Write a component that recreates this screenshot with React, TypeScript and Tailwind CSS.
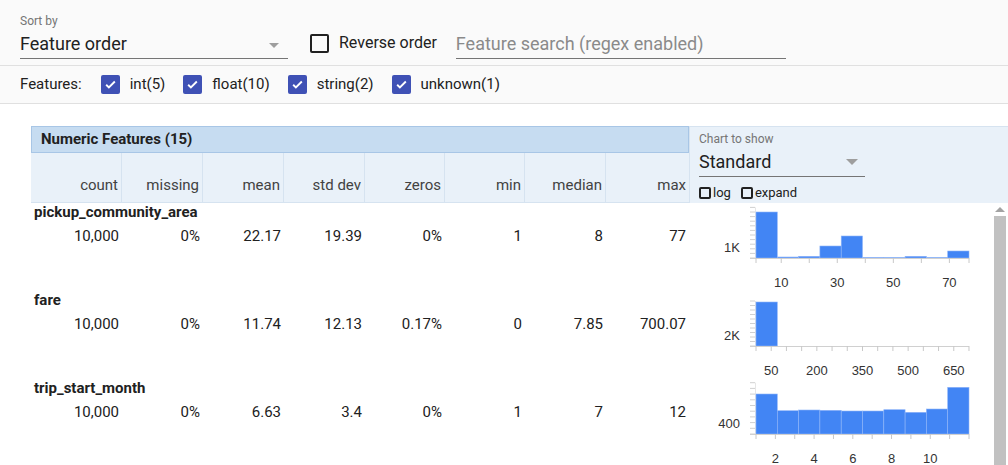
type Tick = { v: number; label?: string };

type ChartSpec = {
  bars: number[];
  ticks: Tick[];
  lo: number;
  hi: number;
  yLabel: string;
  yStep: number;
  yCount: number;
};

const X0 = 56;
const W = 213;
const BASE = 55;

function Histogram({ spec }: { spec: ChartSpec }) {
  const sx = (v: number) => X0 + ((v - spec.lo) / (spec.hi - spec.lo)) * W;
  const bw = W / spec.bars.length;
  return (
    <svg width="290" height="88" className="block" fontFamily="'Liberation Sans', Arial, sans-serif">
      {Array.from({ length: spec.yCount }).map((_, i) => (
        <line key={i} x1={50} x2={55} y1={BASE - i * spec.yStep} y2={BASE - i * spec.yStep} stroke="#d0d0d0" strokeWidth={1} />
      ))}
      <line x1={55.5} x2={55.5} y1={BASE - (spec.yCount - 1) * spec.yStep} y2={BASE} stroke="#e6e6e6" />
      {spec.bars.map((h, i) =>
        h > 0 ? (
          <rect key={i} x={X0 + i * bw} y={BASE - h} width={bw} height={h} fill="#4285f4" stroke="#8fb5f8" strokeWidth={0.6} />
        ) : null
      )}
      <line x1={50} x2={X0 + W} y1={BASE + 0.5} y2={BASE + 0.5} stroke="#d0d0d0" />
      {spec.ticks.map((t, i) => (
        <line key={i} x1={sx(t.v)} x2={sx(t.v)} y1={BASE} y2={BASE + 5} stroke="#c8c8c8" />
      ))}
      {spec.ticks
        .filter((t) => t.label)
        .map((t, i) => (
          <text key={i} x={sx(t.v)} y={BASE + 29} fontSize="13" fill="#333" textAnchor="middle">
            {t.label}
          </text>
        ))}
      <text x={40} y={BASE - 6} fontSize="13" fill="#333" textAnchor="end">
        {spec.yLabel}
      </text>
    </svg>
  );
}

const charts: ChartSpec[] = [
  {
    bars: [46, 1, 1.7, 12, 22, 0.5, 0.4, 1.7, 0.4, 7],
    ticks: [
      { v: 1 },
      { v: 10, label: "10" },
      { v: 20 },
      { v: 30, label: "30" },
      { v: 40 },
      { v: 50, label: "50" },
      { v: 60 },
      { v: 70, label: "70" },
      { v: 77 },
    ],
    lo: 1,
    hi: 77,
    yLabel: "1K",
    yStep: 4.6,
    yCount: 12,
  },
  {
    bars: [44, 0, 0, 0, 0, 0, 0, 0, 0, 0],
    ticks: Array.from({ length: 15 }).map((_, i) => ({
      v: i * 50,
      label: [50, 200, 350, 500, 650].includes(i * 50) ? String(i * 50) : undefined,
    })),
    lo: 0,
    hi: 700.07,
    yLabel: "2K",
    yStep: 4.5,
    yCount: 11,
  },
  {
    bars: [40, 23.3, 24, 23.7, 23, 23, 24.3, 21.7, 25, 46.7],
    ticks: Array.from({ length: 12 }).map((_, i) => ({
      v: i + 1,
      label: [2, 4, 6, 8, 10].includes(i + 1) ? String(i + 1) : undefined,
    })),
    lo: 1,
    hi: 12,
    yLabel: "400",
    yStep: 5.7,
    yCount: 10,
  },
];

const columns = ["count", "missing", "mean", "std dev", "zeros", "min", "median", "max"];
const colWidths = ["w-[91px]", "w-[81px]", "w-[81px]", "w-[81px]", "w-[80px]", "w-[80px]", "w-[81px]", "w-[83px]"];

const rows = [
  { name: "pickup_community_area", vals: ["10,000", "0%", "22.17", "19.39", "0%", "1", "8", "77"] },
  { name: "fare", vals: ["10,000", "0%", "11.74", "12.13", "0.17%", "0", "7.85", "700.07"] },
  { name: "trip_start_month", vals: ["10,000", "0%", "6.63", "3.4", "0%", "1", "7", "12"] },
];

function BlueCheck({ label }: { label: string }) {
  return (
    <div className="flex items-center gap-[10px]">
      <span className="w-[19px] h-[19px] rounded-[2px] bg-[#3f51b5] flex items-center justify-center">
        <svg width="13" height="13" viewBox="0 0 24 24">
          <path d="M4 12.5l5 5L20 6.5" fill="none" stroke="#fff" strokeWidth="3.4" />
        </svg>
      </span>
      <span className="text-[15px] text-[#212121]">{label}</span>
    </div>
  );
}

function SmallBox({ label }: { label: string }) {
  return (
    <div className="flex items-center gap-[2px]">
      <span className="w-[12px] h-[12px] border-2 border-[#222] rounded-[2px]" />
      <span className="text-[13px] text-[#212121]">{label}</span>
    </div>
  );
}

export default function App() {
  return (
    <div className="w-[1008px] h-[465px] overflow-hidden bg-white font-['Roboto',sans-serif] text-[#212121]">
      {/* top controls */}
      <div className="bg-[#fafafa]">
        <div className="h-[66px] px-5 flex border-b border-[#e0e0e0]">
          <div className="w-[268px] pt-[13px]">
            <p className="text-[12px] leading-[16px] text-[#757575]">Sort by</p>
            <div className="mt-[3px] h-[27px] border-b border-[#757575] flex items-center justify-between">
              <span className="text-[18px] leading-[24px] -mt-[2px]">Feature order</span>
              <span className="mr-[9px] w-0 h-0 border-l-[5px] border-r-[5px] border-t-[5px] border-l-transparent border-r-transparent border-t-[#9e9e9e]" />
            </div>
          </div>
          <div className="ml-[22px] pt-[34px] flex items-start gap-[10px]">
            <span className="w-[19px] h-[19px] border-2 border-[#212121] rounded-[2px]" />
            <span className="text-[16px] leading-[19px] -mt-[1px]">Reverse order</span>
          </div>
          <div className="ml-[19px] w-[330px] pt-[32px]">
            <div className="h-[27px] border-b border-[#757575] text-[18px] leading-[24px] text-[#8a8a8a]">
              Feature search (regex enabled)
            </div>
          </div>
        </div>
        <div className="h-[38px] px-5 flex items-center border-b border-[#e0e0e0]">
          <span className="text-[15px] mr-[19px]">Features:</span>
          <div className="flex items-center gap-[18px]">
            <BlueCheck label="int(5)" />
            <BlueCheck label="float(10)" />
            <BlueCheck label="string(2)" />
            <BlueCheck label="unknown(1)" />
          </div>
        </div>
      </div>

      {/* table */}
      <div className="mt-[22px] pl-[31px]">
        <div className="flex">
          <div className="w-[658px]">
            <div className="h-[27px] bg-[#c6dcf1] border border-[#a8c6e6] flex items-center pl-[9px] text-[15px] font-bold text-[#212121]">
              Numeric Features (15)
            </div>
            <div className="h-[50px] bg-[#e9f1f9] flex border-b border-[#d6e3f0]">
              {columns.map((c, i) => (
                <div
                  key={c}
                  className={`${colWidths[i]} ${i < 7 ? "border-r border-[#d6e3f0]" : ""} flex items-end justify-end pr-[3px] pb-[6px] text-[15px] text-[#424242]`}
                >
                  {c}
                </div>
              ))}
            </div>
          </div>
          <div className="flex-1 h-[77px] bg-[#e9f1f9] border-t border-l border-[#d6e3f0] pl-[9px] pt-[4px]">
            <p className="text-[12px] leading-[16px] text-[#757575]">Chart to show</p>
            <div className="w-[166px] h-[30px] border-b border-[#757575] flex items-center justify-between">
              <span className="text-[18px] leading-[24px]">Standard</span>
              <span className="mr-[7px] w-0 h-0 border-l-[6px] border-r-[6px] border-t-[6px] border-l-transparent border-r-transparent border-t-[#9e9e9e]" />
            </div>
            <div className="mt-[6px] flex gap-[10px]">
              <SmallBox label="log" />
              <SmallBox label="expand" />
            </div>
          </div>
        </div>

        <div className="flex">
          <div className="w-[658px]">
            {rows.map((r) => (
              <div key={r.name} className="h-[88px]">
                <p className="pl-[3px] text-[15px] leading-[18px] font-bold">{r.name}</p>
                <div className="mt-[6px] flex">
                  {r.vals.map((v, i) => (
                    <div key={i} className={`${colWidths[i]} text-right pr-[3px] text-[15px] leading-[18px]`}>
                      {v}
                    </div>
                  ))}
                </div>
              </div>
            ))}
          </div>
          <div className="w-[302px] pl-[11px]">
            {charts.map((c, i) => (
              <Histogram key={i} spec={c} />
            ))}
          </div>
          <div className="w-[17px] flex flex-col items-center pt-[4px]">
            <span className="w-0 h-0 border-l-[5px] border-r-[5px] border-b-[5px] border-l-transparent border-r-transparent border-b-[#a3a3a3]" />
            <div className="mt-[4px] w-[12px] h-[260px] bg-[#c1c1c1]" />
          </div>
        </div>
      </div>
    </div>
  );
}
